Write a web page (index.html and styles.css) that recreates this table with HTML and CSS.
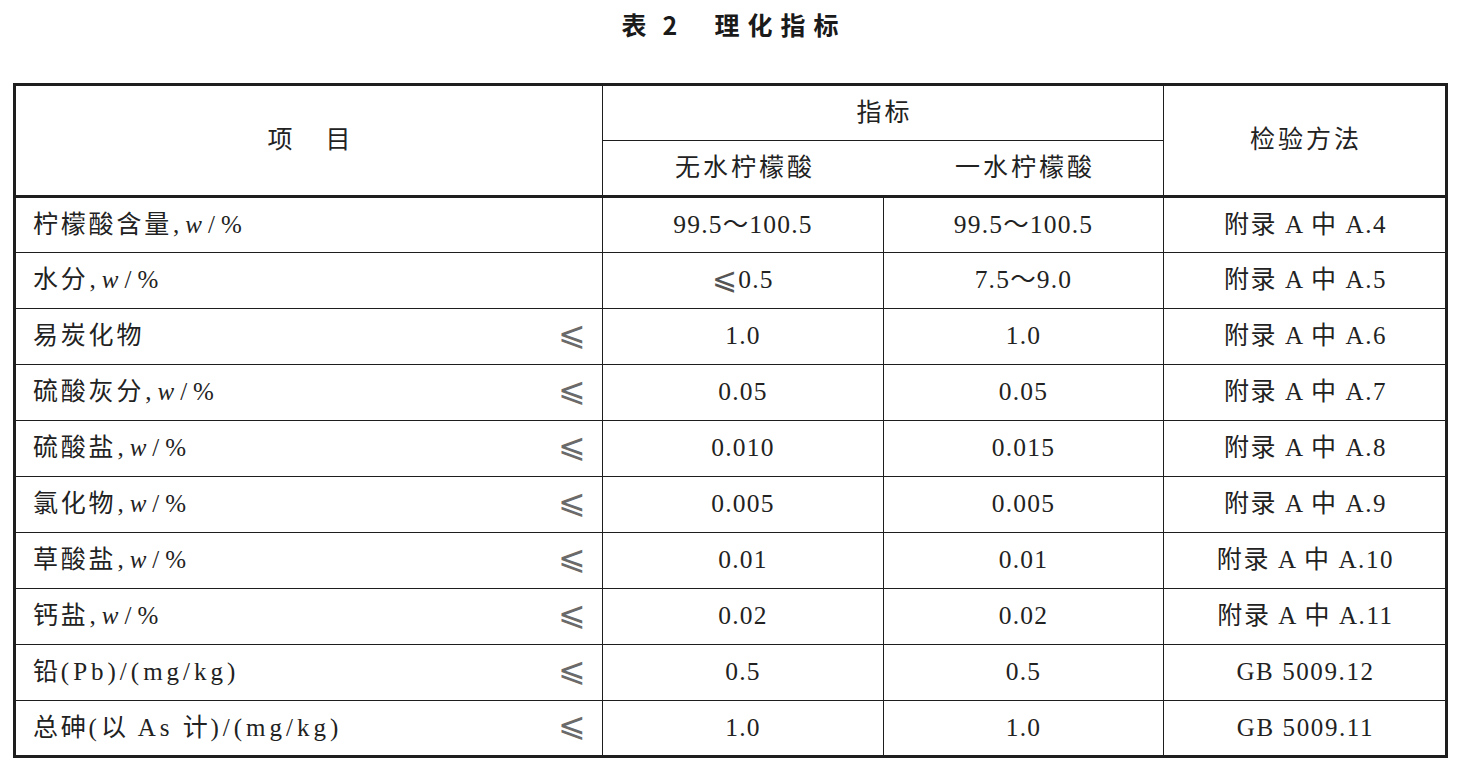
FILE: index.html
```html
<!DOCTYPE html>
<html lang="zh-CN">
<head>
<meta charset="utf-8">
<title>表 2 理化指标</title>
<link rel="stylesheet" href="styles.css">
</head>
<body>
<h1 class="title"><span class="t-label">表</span><span class="t-num">2</span><span class="t-name">理化指标</span></h1>
<div class="sheet">
  <div class="row head">
    <div class="c h-item"><span class="gap">项</span>目</div>
    <div class="c h-index">指标</div>
    <div class="c h-method">检验方法</div>
    <div class="c h-sub1">无水柠檬酸</div>
    <div class="c h-sub2">一水柠檬酸</div>
  </div>
  <div class="row">
    <div class="c name"><span>柠檬酸含量<span class="unit">,<i>w</i>/%</span></span></div>
    <div class="c num">99.5～100.5</div>
    <div class="c num">99.5～100.5</div>
    <div class="c method">附录 A 中 A.4</div>
  </div>
  <div class="row">
    <div class="c name"><span>水分<span class="unit">,<i>w</i>/%</span></span></div>
    <div class="c num"><span class="le inl">⩽</span><span>0.5</span></div>
    <div class="c num">7.5～9.0</div>
    <div class="c method">附录 A 中 A.5</div>
  </div>
  <div class="row">
    <div class="c name"><span>易炭化物</span><span class="le">⩽</span></div>
    <div class="c num">1.0</div>
    <div class="c num">1.0</div>
    <div class="c method">附录 A 中 A.6</div>
  </div>
  <div class="row">
    <div class="c name"><span>硫酸灰分<span class="unit">,<i>w</i>/%</span></span><span class="le">⩽</span></div>
    <div class="c num">0.05</div>
    <div class="c num">0.05</div>
    <div class="c method">附录 A 中 A.7</div>
  </div>
  <div class="row">
    <div class="c name"><span>硫酸盐<span class="unit">,<i>w</i>/%</span></span><span class="le">⩽</span></div>
    <div class="c num">0.010</div>
    <div class="c num">0.015</div>
    <div class="c method">附录 A 中 A.8</div>
  </div>
  <div class="row">
    <div class="c name"><span>氯化物<span class="unit">,<i>w</i>/%</span></span><span class="le">⩽</span></div>
    <div class="c num">0.005</div>
    <div class="c num">0.005</div>
    <div class="c method">附录 A 中 A.9</div>
  </div>
  <div class="row">
    <div class="c name"><span>草酸盐<span class="unit">,<i>w</i>/%</span></span><span class="le">⩽</span></div>
    <div class="c num">0.01</div>
    <div class="c num">0.01</div>
    <div class="c method">附录 A 中 A.10</div>
  </div>
  <div class="row">
    <div class="c name"><span>钙盐<span class="unit">,<i>w</i>/%</span></span><span class="le">⩽</span></div>
    <div class="c num">0.02</div>
    <div class="c num">0.02</div>
    <div class="c method">附录 A 中 A.11</div>
  </div>
  <div class="row">
    <div class="c name"><span>铅<span class="lat">(Pb)/(mg/kg)</span></span><span class="le">⩽</span></div>
    <div class="c num">0.5</div>
    <div class="c num">0.5</div>
    <div class="c method">GB 5009.12</div>
  </div>
  <div class="row">
    <div class="c name"><span>总砷<span class="lat">(</span>以 <span class="lat">As</span> 计<span class="lat">)/(mg/kg)</span></span><span class="le">⩽</span></div>
    <div class="c num">1.0</div>
    <div class="c num">1.0</div>
    <div class="c method">GB 5009.11</div>
  </div>
</div>
</body>
</html>
```

FILE: styles.css
```css
html, body {
  margin: 0;
  padding: 0;
  background: #ffffff;
}

body {
  color: #222222;
  font-family: "Liberation Serif", "Noto Sans CJK SC", serif;
}

.title {
  margin: 0;
  padding: 6px 0 0 3px;
  height: 38px;
  line-height: 36px;
  text-align: center;
  font-family: "Noto Sans CJK SC", "Noto Sans", sans-serif;
  font-size: 25px;
  font-weight: 700;
  color: #1a1a1a;
}

.t-label {
  margin-right: 16px;
}

.t-num {
  margin-right: 37px;
}

.t-name {
  letter-spacing: 8px;
}

.sheet {
  display: grid;
  grid-template-columns: 587px 281px 280px 281px;
  grid-template-rows: 55px 57px 55px repeat(8, 56px) 54px;
  width: 1429px;
  margin: 39px 0 0 13px;
  border: 3px solid #1e1e1e;
}

.row {
  display: contents;
}

.c {
  box-sizing: border-box;
  display: flex;
  align-items: center;
  justify-content: center;
  padding-bottom: 1px;
  border-right: 1px solid #1e1e1e;
  border-bottom: 1px solid #1e1e1e;
  font-size: 25px;
  line-height: 30px;
  white-space: nowrap;
}

.row > .c:nth-child(4) {
  border-right: 0;
}

.row:last-child > .c {
  border-bottom: 0;
}

.head .c {
  letter-spacing: 3px;
  padding-left: 3px;
}

.h-item {
  grid-column: 1;
  grid-row: 1 / 3;
  border-bottom-width: 3px !important;
}

.gap {
  margin-right: 30px;
}

.h-index {
  grid-column: 2 / 4;
  grid-row: 1;
}

.row.head > .c.h-method {
  grid-column: 4;
  grid-row: 1 / 3;
  border-right: 0;
  border-bottom-width: 3px;
}

.h-sub1 {
  grid-column: 2;
  grid-row: 2;
  border-bottom-width: 3px !important;
}

.h-sub2 {
  grid-column: 3;
  grid-row: 2;
  border-bottom-width: 3px !important;
  border-right: 1px solid #1e1e1e !important;
}

.name {
  justify-content: space-between;
  padding: 0 16px 1px 17px;
  letter-spacing: 2.8px;
}

.unit {
  letter-spacing: 6px;
  margin-left: 1px;
}

.unit i {
  font-style: italic;
}

.lat {
  letter-spacing: 4px;
}

.num {
  letter-spacing: 1.2px;
  font-size: 25.5px;
}

.method {
  letter-spacing: 1.6px;
  padding-left: 2px;
}

.le {
  font-family: "DejaVu Sans", sans-serif;
  font-size: 33px;
  line-height: 36px;
  font-weight: 200;
  letter-spacing: 0;
  color: #6a6a6a;
  margin-top: -5px;
}

.le.inl {
  font-size: 30px;
  margin-right: 1px;
  margin-top: -2px;
  color: #555555;
}
```
